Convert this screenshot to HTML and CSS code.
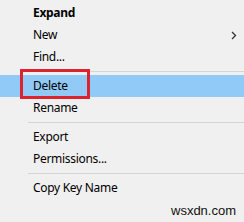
FILE: index.html
```html
<!DOCTYPE html>
<html lang="en">
<head>
    <meta charset="UTF-8">
    <title>Context Menu</title>
    <link rel="stylesheet" href="styles.css">
</head>
<body>
    <div class="menu">
        <div class="item bold">Expand</div>
        <div class="item">New
            <svg class="arrow" width="6" height="9" viewBox="0 0 6 9">
                <path d="M1 1 L4.5 4.5 L1 8" fill="none" stroke="#333" stroke-width="1.3"/>
            </svg>
        </div>
        <div class="item">Find...</div>
        <div class="sep"></div>
        <div class="item active">Delete</div>
        <div class="item">Rename</div>
        <div class="sep"></div>
        <div class="item">Export</div>
        <div class="item">Permissions...</div>
        <div class="sep"></div>
        <div class="item">Copy Key Name</div>

        <div class="mark"></div>
    </div>
    <div class="watermark">wsxdn.com</div>
</body>
</html>
```
FILE: styles.css
```css
*{
    margin: 0;
    padding: 0;
    box-sizing: border-box;
}

body{
    width: 244px;
    height: 222px;
    background-color: #f0f0f0;
    font-family: "Noto Sans", "Liberation Sans", sans-serif;
    font-size: 12px;
    color: #000;
    position: relative;
    overflow: hidden;
}

.menu{
    padding-top: 2px;
    position: relative;
}

.menu .item{
    height: 22px;
    line-height: 22px;
    padding-left: 33px;
    padding-right: 7px;
    display: flex;
    align-items: center;
    justify-content: space-between;
    letter-spacing: -0.3px;
}

.menu .bold{
    font-weight: bold;
}

.menu .active{
    background-color: #91c9f7;
}

.menu .sep{
    height: 7px;
    margin-left: 28px;
    display: flex;
    align-items: center;
}

.menu .sep::after{
    content: "";
    display: block;
    width: 100%;
    height: 1px;
    background-color: #d5d5d5;
}

.mark{
    position: absolute;
    left: 20px;
    top: 69px;
    width: 70px;
    height: 30px;
    border: 3px solid #dc2430;
}

.watermark{
    position: absolute;
    left: 171px;
    top: 203px;
    font-family: "Liberation Sans", Arial, sans-serif;
    font-size: 13px;
    color: #111;
}
```
